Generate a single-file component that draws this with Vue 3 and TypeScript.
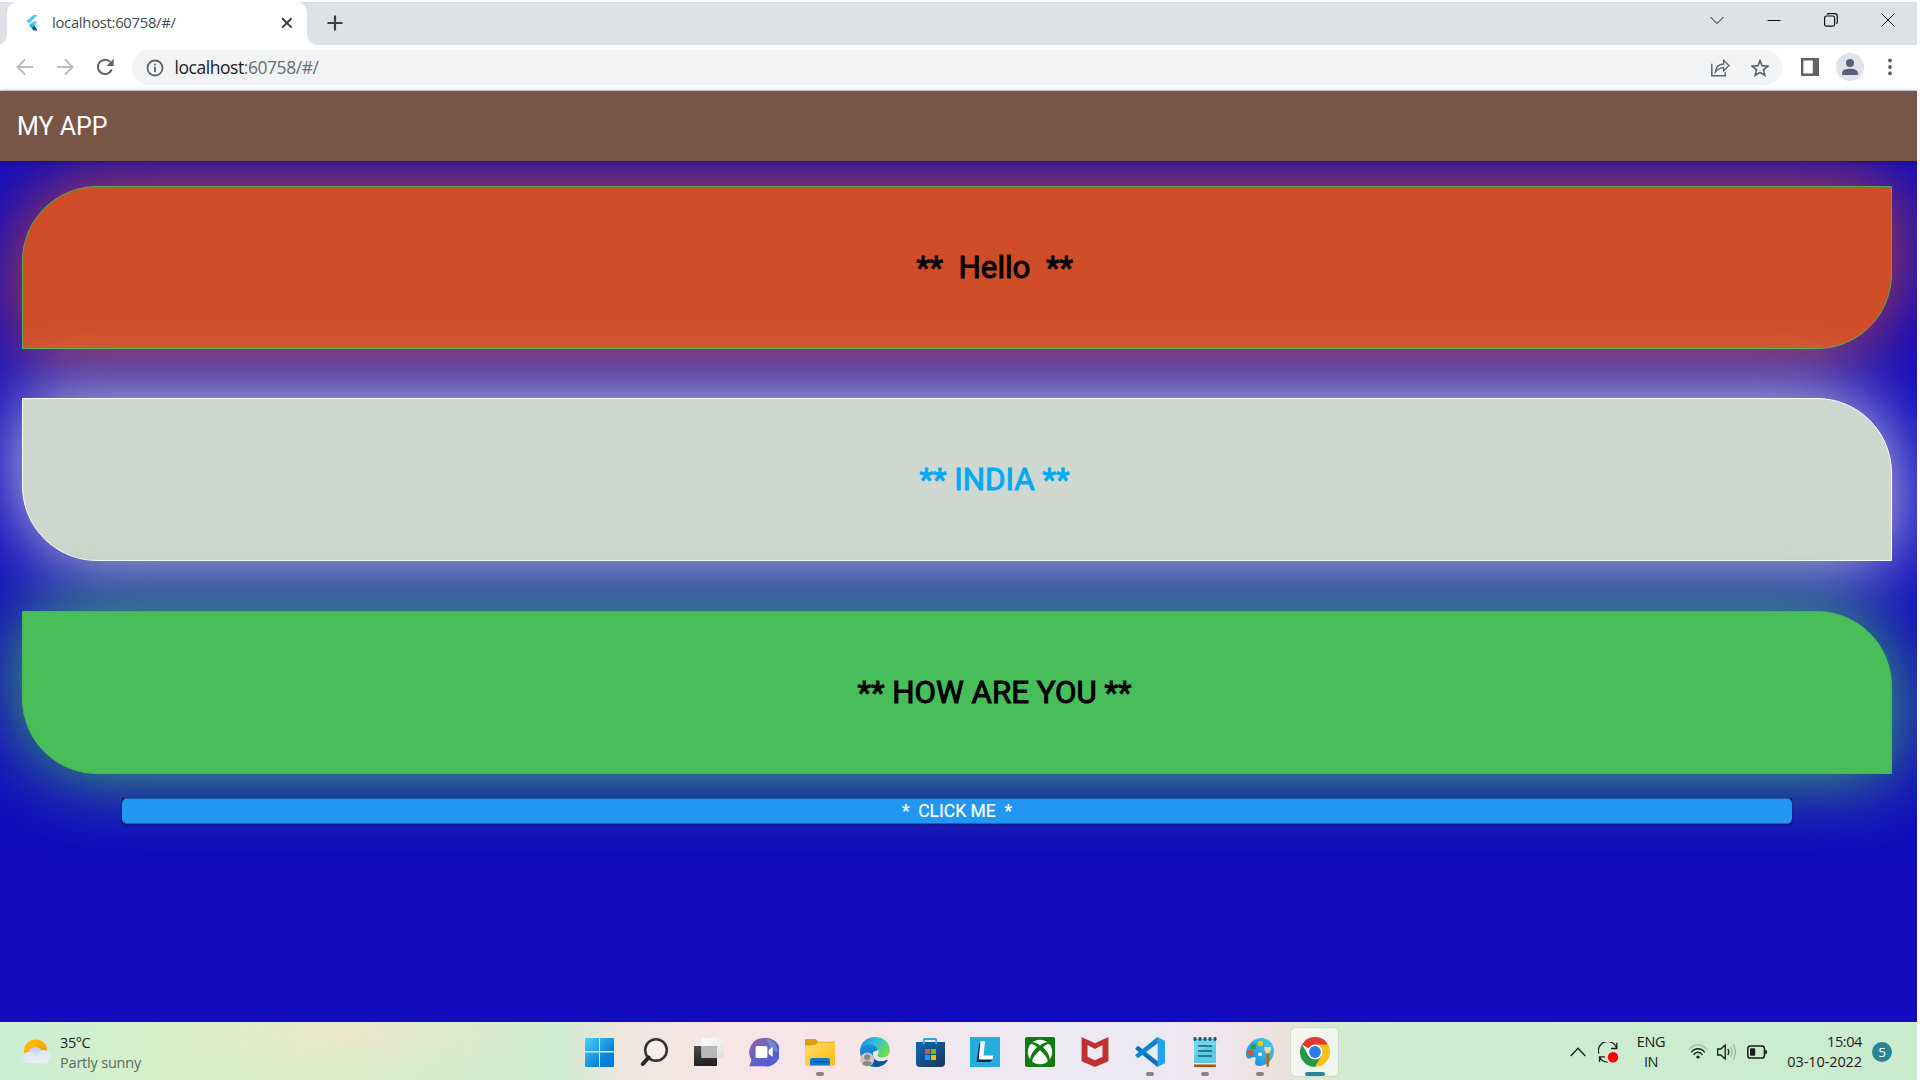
<script setup lang="ts">
interface Banner {
  id: string
  text: string
}

const banners: Banner[] = [
  { id: 'hello', text: '**  Hello  **' },
  { id: 'india', text: '** INDIA **' },
  { id: 'how', text: '** HOW ARE YOU **' },
]
const teeth = [4, 9, 14, 19, 24]
</script>

<template>
  <div class="screen">
    <div class="tabstrip">
      <div class="tab">
        <svg class="favicon" width="12" height="16" viewBox="0 0 12 16">
          <path d="M7.4 0H11.6L3.2 8.6L0.4 5.9Z" fill="#54c5f8" />
          <path d="M7.3 6.6H11.6L8.5 10L5.5 13L2.9 10.4Z" fill="#54c5f8" />
          <path d="M5.5 12.9L8.3 10.3L11.6 15.4H7.6Z" fill="#01579b" />
          <path d="M3 10.4L5.6 8L8.3 10.4L5.6 13Z" fill="#29b6f6" />
        </svg>
        <span class="tab-title">localhost:60758/#/</span>
        <svg class="tab-close" width="12" height="12" viewBox="0 0 12 12"><path d="M1.2 1.2L10.6 10.6M10.6 1.2L1.2 10.6" stroke="#3c4043" stroke-width="2" /></svg>
      </div>
      <svg class="new-tab" width="16" height="16" viewBox="0 0 16 16"><path d="M8 .5V15.5M.5 8H15.5" stroke="#3c4043" stroke-width="2.2" /></svg>
      <div class="window-buttons">
        <svg width="14" height="14" viewBox="0 0 14 14"><path d="M.5 4L7 10.5L13.5 4" /></svg>
        <svg width="14" height="14" viewBox="0 0 14 14"><path d="M.5 7.5H13.5" /></svg>
        <svg width="14" height="14" viewBox="0 0 14 14"><rect x=".6" y="3" width="10" height="10.2" rx="1.8" stroke-width="1.2" /><path d="M3 1.3Q3.5 .6 4.8 .6H10.5Q13.3 .6 13.3 3.4V9Q13.3 10.4 12.4 10.8" stroke-width="1.2" /></svg>
        <svg width="14" height="14" viewBox="0 0 14 14"><path d="M.5 .5L13.5 13.5M13.5 .5L.5 13.5" /></svg>
      </div>
    </div>

    <div class="toolbar">
      <svg class="nav back" width="18" height="18" viewBox="0 0 18 18"><path d="M17 9H2M9 1.5L1.5 9L9 16.5" /></svg>
      <svg class="nav forward" width="18" height="18" viewBox="0 0 18 18"><path d="M1 9H16M9 1.5L16.5 9L9 16.5" /></svg>
      <svg class="reload" width="18" height="18" viewBox="0 0 18 18"><path d="M15.8 11.4A7.2 7.2 0 1 1 14.3 3.9" fill="none" stroke="#5f6368" stroke-width="2" /><path d="M17.7 .8V8H10.5Z" fill="#5f6368" /></svg>
      <div class="omnibox">
        <svg class="info" width="18" height="18" viewBox="0 0 18 18"><circle cx="9" cy="9" r="7.5" fill="none" stroke="#5f6368" stroke-width="1.8" /><path d="M9 7.8V13M9 4.7V6.5" stroke="#5f6368" stroke-width="1.8" /></svg>
        <span class="url"><b>localhost</b>:60758/#/</span>
        <svg class="share" width="19" height="18" viewBox="0 0 19 18" fill="none" stroke="#5f6368" stroke-width="1.5"><path d="M.8 4.8V16.8H14.2V13.2" /><path d="M4.3 13.2C4.8 8 7.8 5.2 12.6 5V1.2L18 6.6L12.6 12V8.6C9 8.6 6.5 10 4.3 13.2Z" stroke-width="1.3" /></svg>
        <svg class="star" width="18" height="18" viewBox="0 0 18 18"><path d="M9 1.6L11.1 6.7L16.8 7.2L12.5 10.9L13.8 16.4L9 13.4L4.2 16.4L5.5 10.9L1.2 7.2L6.9 6.7Z" fill="none" stroke="#5f6368" stroke-width="1.7" /></svg>
      </div>
      <svg class="panel" width="18" height="18" viewBox="0 0 18 18"><path d="M0 0H18V18H0ZM2.4 2.6V15.4H11.8V2.6Z" fill="#5f6368" fill-rule="evenodd" /></svg>
      <svg class="avatar" width="28" height="28" viewBox="0 0 28 28"><circle cx="14" cy="14" r="14" fill="#dfe2e9" /><circle cx="14" cy="10" r="4" fill="#56607a" /><path d="M6.2 22V19.8C6.2 17 10 15.7 14 15.7S21.8 17 21.8 19.8V22Z" fill="#56607a" /></svg>
      <svg class="dots" width="4" height="18" viewBox="0 0 4 18"><circle cx="2" cy="2.5" r="1.9" /><circle cx="2" cy="9" r="1.9" /><circle cx="2" cy="15.4" r="1.9" /></svg>
    </div>

    <header class="appbar">MY APP</header>

    <main class="page">
      <div v-for="b in banners" :key="b.id" class="banner" :class="b.id"><span>{{ b.text }}</span></div>
      <div class="button-slot"><button class="click">*&nbsp; CLICK ME &nbsp;*</button></div>
    </main>

    <footer class="taskbar">
      <div class="weather">
        <svg width="28" height="25" viewBox="0 0 28 25">
          <defs>
            <linearGradient id="sun" x1="0" y1="0" x2="1" y2="1"><stop offset="0" stop-color="#ffc800" /><stop offset="1" stop-color="#f78a00" /></linearGradient>
            <linearGradient id="cloud" x1="0" y1="0" x2="0" y2="1"><stop offset="0" stop-color="#b9d0f3" /><stop offset="1" stop-color="#f3f4fa" /></linearGradient>
          </defs>
          <circle cx="12.6" cy="12" r="11.6" fill="url(#sun)" />
          <path d="M5.5 24A5.5 5.5 0 0 1 5.6 13A7.5 7.5 0 0 1 19 11.6A6.2 6.2 0 1 1 21.8 24Z" fill="url(#cloud)" />
          <path d="M5.5 24A5.5 5.5 0 1 1 9.5 14.5L15 18.4A6.5 6.5 0 1 1 21.8 24Z" fill="#e4e9f6" opacity=".75" />
        </svg>
        <div class="weather-text"><span class="temp">35°C</span><span class="cond">Partly sunny</span></div>
      </div>

      <div class="apps">
        <div class="app">
          <svg viewBox="0 0 30 30"><defs><linearGradient id="win" x1="0" y1="0" x2="1" y2="1"><stop offset="0" stop-color="#4cd0fb" /><stop offset=".65" stop-color="#0a84dc" /><stop offset="1" stop-color="#0078d4" /></linearGradient></defs><path d="M2 1H15V14H1V2Q1 1 2 1ZM16 1H29Q30 1 30 2V14H16ZM1 15.5H15V30H2Q1 30 1 29ZM16 15.5H30V29Q30 30 29 30H16Z" fill="url(#win)" /></svg>
        </div>
        <div class="app">
          <svg viewBox="0 0 30 30"><circle cx="17" cy="13" r="10.8" fill="#fff" fill-opacity=".35" stroke="#343434" stroke-width="2.6" /><path d="M9.6 20.5L3.8 27" stroke="#252525" stroke-width="4" stroke-linecap="round" /></svg>
        </div>
        <div class="app">
          <svg viewBox="0 0 30 30"><defs><linearGradient id="tv" x1="0" y1="0" x2="0" y2="1"><stop offset="0" stop-color="#4c4c4c" /><stop offset="1" stop-color="#1e1e1e" /></linearGradient><linearGradient id="tv2" x1="0" y1="0" x2="1" y2="1"><stop offset="0" stop-color="#fff" /><stop offset="1" stop-color="#ddd" /></linearGradient></defs><rect x="0" y="9" width="23" height="20" rx="1" fill="url(#tv)" /><rect x="7.5" y="1" width="22.5" height="20" rx="1" fill="url(#tv2)" /><path d="M7.5 9H23V21H8.5Q7.5 21 7.5 20Z" fill="#b8b8b8" /></svg>
        </div>
        <div class="app">
          <svg viewBox="0 0 30 30"><defs><linearGradient id="chat" x1=".1" y1=".1" x2=".7" y2="1"><stop offset="0" stop-color="#8e62a8" /><stop offset=".5" stop-color="#6264c4" /><stop offset="1" stop-color="#5059d0" /></linearGradient></defs><path d="M15 1A14.3 14.3 0 1 1 15 29.3H1.5Q0 29.3 .7 28L2.5 23A14.3 14.3 0 0 1 15 1Z" fill="url(#chat)" /><path d="M17 1.5A14.3 14.3 0 0 1 29 15L22 13Z" fill="#7ba0e8" opacity=".55" /><rect x="6.6" y="9" width="11.8" height="12" rx="1.5" fill="#fff" /><path d="M19.7 13L23 10.3Q23.7 10 23.7 11V19Q23.7 20 23 19.6L19.7 17Z" fill="#fff" /></svg>
        </div>
        <div class="app run">
          <svg viewBox="0 0 30 30"><defs><linearGradient id="fold" x1="0" y1="0" x2="1" y2="1"><stop offset="0" stop-color="#ffdb69" /><stop offset="1" stop-color="#fbbc14" /></linearGradient></defs><path d="M0 7V3Q0 2 1 2H10Q11.5 2 13 4.8H29Q30 4.8 30 6V10H0Z" fill="#dc9d10" /><path d="M0 8.5Q10 8.5 12 6.5Q13 5.5 14 5.5H29.2Q30 5.5 30 6.5V27.5Q30 28.5 29 28.5H1Q0 28.5 0 27.5Z" fill="url(#fold)" /><path d="M5 28.5V23.5Q5 21 7.5 21H22.5Q25 21 25 23.5V28.5Z" fill="#1078cf" /><path d="M8 24.8H22" stroke="#064681" stroke-width="1.2" /></svg>
        </div>
        <div class="app">
          <svg viewBox="0 0 30 30"><defs><linearGradient id="edgeA" x1="0" y1="0" x2="1" y2=".5"><stop offset="0" stop-color="#128ee0" /><stop offset=".5" stop-color="#31bfe0" /><stop offset="1" stop-color="#69df50" /></linearGradient><linearGradient id="edgeB" x1="0" y1="0" x2="0" y2="1"><stop offset="0" stop-color="#1994df" /><stop offset="1" stop-color="#0867bd" /></linearGradient></defs><path d="M.2 12C1 5 7 0 15 0C24 0 30 6 30 13C30 18 26 20.5 22 20.5C18.5 20.5 16.5 19 18 17C20 14 17 10.5 12 9.8C7 9 2.5 11 .2 16Z" fill="url(#edgeA)" /><path d="M.1 13C3 6.5 11 6 15.7 9.5C19 12 17.5 14 15 14C11 16 12 22 18 24C22 25.5 26 23.5 28 23C25 28 20 30 15 30C6 30-.5 22 .1 13Z" fill="url(#edgeB)" /><path d="M13 16C12 20 15 24.4 20 24.6Q24 24.7 27.8 22.5C25 28 20 30.4 15 29.8C10 27 9.5 20 13 16Z" fill="#0d55a2" /><circle cx="7.2" cy="22.5" r="7" fill="#c9c6c4" /><circle cx="7.2" cy="20.3" r="3" fill="#8a8785" /><path d="M2.7 27Q3 24 7.2 24T11.8 27Q10 29 7.2 29T2.7 27Z" fill="#8a8785" /></svg>
        </div>
        <div class="app">
          <svg viewBox="0 0 30 30"><defs><linearGradient id="store" x1="0" y1="0" x2="1" y2="1"><stop offset="0" stop-color="#0969b8" /><stop offset="1" stop-color="#203458" /></linearGradient></defs><path d="M8.8 7V3Q8.8 2 9.8 2H20.2Q21.2 2 21.2 3V7" fill="none" stroke="#20a9e8" stroke-width="1.8" /><path d="M1 5H30V26Q30 30 26 30H5Q1 30 1 26Z" fill="url(#store)" /><path d="M8.8 5V7M21.2 5V7" stroke="#3cc6f5" stroke-width="1.8" /><path d="M10 12H15V17H10Z" fill="#f25022" /><path d="M16 12H21V17H16Z" fill="#7fba00" /><path d="M10 18H15V23H10Z" fill="#00a4ef" /><path d="M16 18H21V23H16Z" fill="#ffb900" /></svg>
        </div>
        <div class="app">
          <svg viewBox="0 0 30 30"><rect width="30" height="30" fill="#25aedb" /><path d="M9.5 4.5L6.5 25H20L23 22.5L11 20Z" fill="#0a2a58" /><path d="M10.5 4.3H15L13.5 18.5H23.2L22.6 22.6H8.7Z" fill="#fff" /></svg>
        </div>
        <div class="app">
          <svg viewBox="0 0 30 30"><rect width="30" height="30" rx="2" fill="#107c10" /><circle cx="15" cy="15" r="12.2" fill="#fff" /><path d="M6 5.5C9 4.7 12 6.2 15 8.4C18 6.2 21 4.7 24 5.5L25.5 7C22 6.5 20 8.2 18 10.3C22 14 25.5 19.5 24.7 24L22.8 24.5C22.5 20.5 18.5 16 15 13.2C11.5 16 7.5 20.5 7.2 24.5L5.3 24C4.5 19.5 8 14 12 10.3C10 8.2 8 6.5 4.5 7Z" fill="#107c10" /></svg>
        </div>
        <div class="app">
          <svg viewBox="0 0 30 30"><path d="M1.6 0L15 6.2L28.4 0V24.3L15 30L1.6 24.3ZM7.5 8V19.7L15 23.3L22.5 19.7V8L15 11.9Z" fill="#c2302e" fill-rule="evenodd" /></svg>
        </div>
        <div class="app run">
          <svg viewBox="0 0 30 30"><path d="M.4 11.2L2.5 9.3Q3.2 8.9 4 9.4L23 24.5V29.6L21.5 29.2L.4 12.3Z" fill="#0d70b8" /><path d="M.4 18.8L2.5 20.7Q3.2 21.1 4 20.6L23 6V.4L21.5 .8L.4 17.7Z" fill="#0a86d2" /><path d="M21.4 .5Q22.3 0 23.2 .4L29 3.2Q30 3.7 30 4.8V25.2Q30 26.3 29 26.8L23.2 29.6Q22.3 30 21.4 29.5Q22.7 29.2 22.7 27.5V2.5Q22.7 .8 21.4 .5Z" fill="#26a0f0" /></svg>
        </div>
        <div class="app run">
          <svg viewBox="0 0 30 30"><path d="M4 2H26V26H4Z" fill="#5fcbe2" /><path d="M4 2H26V8Q12 10 4 20Z" fill="#7bdcec" opacity=".7" /><rect x="4" y="26" width="22" height="1.6" fill="#eee" /><path d="M4 27.5H26V29Q26 30 25 30H5Q4 30 4 29Z" fill="#a8510d" /><path d="M8 9H22M8 14H22M8 19H22" stroke="#146178" stroke-width="1.6" /><ellipse v-for="x in teeth" :key="x" :cx="x + 1" cy="2" rx="1.7" ry="2.1" fill="#155e76" /></svg>
        </div>
        <div class="app run">
          <svg viewBox="0 0 30 30"><defs><linearGradient id="paint" x1="1" y1="0" x2="0" y2="1"><stop offset="0" stop-color="#49d0f3" /><stop offset="1" stop-color="#1684d4" /></linearGradient></defs><path d="M15 1C23 0 29 6 29 14C29 22 22 29 14 29C10 29 9.5 26 10.5 23C11.5 20 9 19 6 21C3 22.5 1 21 1 17C1.2 9 7 2 15 1ZM15 15.2A2 2 0 1 0 15.1 19.2A2 2 0 1 0 15 15.2Z" fill="url(#paint)" fill-rule="evenodd" /><circle cx="15.5" cy="6.5" r="2.7" fill="#f6c710" /><circle cx="8.4" cy="9.6" r="2.6" fill="#2d9c2e" /><circle cx="5.4" cy="15.6" r="2.6" fill="#e2532a" /><path d="M19.3 10H25.8V13L24 16.5H21.3L19.3 13Z" fill="#f3d6a9" /><path d="M21.2 16.5H24.2L24 29Q22.6 31 21.6 29Z" fill="#b56a1b" /></svg>
        </div>
        <div class="app active">
          <svg viewBox="0 0 30 30"><path d="M15 15L2 7.5A15 15 0 0 1 28 7.5Z" fill="#e23a2e" /><path d="M15 7.5H28A15 15 0 0 1 15 30L21.5 18.7Z" fill="#fbc116" /><path d="M2 7.5A15 15 0 0 0 15 30L21.5 18.8L15 15L8.5 18.8Z" fill="#279847" /><circle cx="15" cy="15" r="7.4" fill="#fff" /><circle cx="15" cy="15" r="5.9" fill="#2e79ee" /></svg>
        </div>
      </div>

      <div class="tray">
        <svg class="up" width="16" height="10" viewBox="0 0 16 10"><path d="M.7 9L8 1.3L15.3 9" fill="none" stroke="#1b1b1b" stroke-width="1.3" /></svg>
        <svg class="sync" width="21" height="21" viewBox="0 0 21 21"><path d="M.8 11.5A9 9 0 0 1 18.6 6M18.8 .8V6.5H13M1.5 20V14.8H7M1.5 15Q4 19.8 9.5 20.2" fill="none" stroke="#1b1b1b" stroke-width="1.3" /><circle cx="15" cy="15.2" r="5.2" fill="#f00" /></svg>
        <div class="lang"><span>ENG</span><span>IN</span></div>
        <svg class="wifi" width="20" height="16" viewBox="0 0 20 16" fill="none" stroke="#1b1b1b" stroke-width="1.4"><path d="M.7 6.2Q4.5 1 10 1T19.3 6.2" stroke="#a5bfa6" /><path d="M3.2 8.4Q6 4.8 10 4.8T16.8 8.4M5.6 10.8Q7.4 8.3 10 8.3T14.4 10.8" /><circle cx="10" cy="13" r="1.6" fill="#1b1b1b" stroke="none" /></svg>
        <svg class="vol" width="21" height="18" viewBox="0 0 21 18" fill="none" stroke="#1b1b1b" stroke-width="1.3"><path d="M.7 6H3.8L8.2 2V16L3.8 12H.7Z" /><path d="M10.8 6Q12.8 9 10.8 12" /><path d="M13.5 3.8Q16.7 9 13.5 14.2M16.2 1.5Q20.8 9 16.2 16.5" stroke="#a0b9a1" /></svg>
        <svg class="bat" width="21" height="14" viewBox="0 0 21 14"><rect x=".8" y="1" width="16.6" height="12" rx="2.6" fill="none" stroke="#1b1b1b" stroke-width="1.5" /><rect x="3" y="3.2" width="5.2" height="7.6" rx="1" fill="#1b1b1b" /><path d="M18.2 4.5Q20.2 5 20.2 7T18.2 9.5Z" fill="#1b1b1b" /></svg>
        <div class="clock"><span>15:04</span><span class="date">03-10-2022</span></div>
        <div class="badge">5</div>
      </div>
    </footer>
  </div>
</template>

<style>
body {
  margin: 0;
  background: #fff;
  overflow: hidden;
}
</style>

<style scoped>
.screen {
  width: 1917px;
  height: 1080px;
  padding-top: 2px;
  box-sizing: border-box;
  display: flex;
  flex-direction: column;
  font-family: "Open Sans", "Noto Sans", sans-serif;
  overflow: hidden;
}
svg { display: block; flex: none; }

.tabstrip {
  height: 43px;
  flex: none;
  background: #dee1e6;
  display: flex;
  overflow: hidden;
}
.tab {
  position: relative;
  width: 300px;
  margin-left: 7px;
  box-sizing: border-box;
  padding: 0 14px 0 19px;
  background: #fff;
  border-radius: 10px 10px 0 0;
  display: flex;
  align-items: center;
}
.tab::before, .tab::after {
  content: "";
  position: absolute;
  bottom: 0;
  width: 10px;
  height: 10px;
}
.tab::before { left: -10px; background: radial-gradient(circle at 0 0, transparent 9.5px, #fff 10px); }
.tab::after { right: -10px; background: radial-gradient(circle at 100% 0, transparent 9.5px, #fff 10px); }
.favicon { margin-top: -2px; }
.tab-title {
  margin-left: 14px;
  margin-top: -4px;
  font-size: 14.8px;
  letter-spacing: -0.27px;
  color: #45494d;
  white-space: nowrap;
}
.tab-close { margin-left: auto; margin-top: -1px; }
.new-tab { margin: 13px 0 0 19.5px; }
.window-buttons {
  margin-left: auto;
  margin-right: 22px;
  height: 37px;
  display: flex;
  align-items: center;
  gap: 43px;
}
.window-buttons svg { margin-top: -1px; fill: none; stroke: #111; stroke-width: 1; }

.toolbar {
  height: 46px;
  flex: none;
  box-sizing: border-box;
  background: #fff;
  border-bottom: 1px solid #d4d5d8;
  display: flex;
  align-items: center;
}
.toolbar > svg { margin-top: -1px; }
.nav { fill: none; stroke: #babcbe; stroke-width: 1.9; }
.back { margin-left: 16px; }
.forward { margin-left: 22px; }
.reload { margin-left: 21.5px; }
.omnibox {
  width: 1650px;
  height: 35px;
  margin-left: 18.5px;
  border-radius: 18px;
  background: #f1f3f4;
  display: flex;
  align-items: center;
}
.info { margin-left: 13.5px; }
.url {
  margin-left: 11px;
  margin-top: -1px;
  font-size: 17.5px;
  letter-spacing: -0.45px;
  color: #6a6e73;
  white-space: nowrap;
}
.url b { font-weight: 400; color: #202124; }
.share { margin-left: auto; }
.star { margin: 0 13.5px 0 21px; }
.panel { margin-left: 18.5px; }
.avatar { margin-left: 17.5px; }
.dots { margin-left: 23.5px; fill: #5f6368; }

.appbar {
  position: relative;
  z-index: 1;
  height: 70px;
  flex: none;
  box-sizing: border-box;
  padding-left: 17px;
  background: #795548;
  color: #fff;
  font: 400 25px/72px Roboto, sans-serif;
  box-shadow: 0 1px 5px rgba(0, 0, 0, 0.3);
}
.page {
  height: 861px;
  flex: none;
  box-sizing: border-box;
  padding: 25px 25px 0 22px;
  background: #120cbe;
  display: flex;
  flex-direction: column;
  overflow: hidden;
}
.banner {
  height: 163px;
  flex: none;
  box-sizing: border-box;
  padding-left: 75px;
  border: 1.25px solid;
  display: flex;
  align-items: center;
  justify-content: center;
  white-space: pre;
  color: #000;
  font: 400 31.25px/36px Roboto, sans-serif;
  -webkit-text-stroke: 1px currentColor;
}
.hello {
  background: #cf4d27;
  border-color: #4caf50;
  border-radius: 75px 0;
  box-shadow: 0 0 78px #cf4d27;
  margin-bottom: 49px;
}
.india {
  background: #cfd8d0;
  border-color: #fff;
  border-radius: 0 75px;
  box-shadow: 0 0 78px #dbe2df;
  margin-bottom: 50px;
}
.india span { color: #03a9f4; -webkit-text-stroke-color: #03a9f4; }
.how {
  background: #47be5a;
  border-color: #4bb453;
  border-radius: 0 75px;
  box-shadow: 0 0 78px #47be5a;
  margin-bottom: 24px;
}
.button-slot {
  margin: 0 100px;
  height: 26px;
  flex: none;
  background: #050524;
  box-shadow: 0 1px 3px rgba(0, 0, 0, 0.3);
  display: flex;
}
.click {
  flex: 1;
  padding: 0;
  border: 0;
  border-radius: 5px;
  background: #2196f3;
  box-shadow: inset 0 1px #1a63a6, inset 0 -1px #1a63a6;
  color: #fff;
  font: 400 17.5px/26px Roboto, sans-serif;
  -webkit-text-stroke: 0.2px #fff;
  white-space: pre;
}

.taskbar {
  flex: 1;
  display: flex;
  background:
    radial-gradient(ellipse 190px 40px at 350px 12px, rgba(245, 226, 205, 0.6), transparent),
    linear-gradient(90deg, #cbeed4 0, #d6f0cb 150px, #dcedca 330px, #d3edce 480px, #cfecd0 560px, #efe6de 625px, #f8e5e6 720px, #f7e4e7 850px, #efe8f0 960px, #ebe9f3 1140px, #efe6ef 1210px, #efe1df 1270px, #d9e9d2 1325px, #cdecd0 1370px, #cbebce 100%);
}
.weather {
  width: 571px;
  padding-left: 23px;
  box-sizing: border-box;
  display: flex;
}
.weather > svg { margin-top: 16.5px; }
.weather-text {
  margin-left: 9px;
  padding-top: 10.5px;
  display: flex;
  flex-direction: column;
  font-size: 14.5px;
  line-height: 20px;
}
.temp { color: #1b1b1b; letter-spacing: -0.4px; }
.cond { color: #586b59; letter-spacing: -0.2px; }
.apps { display: flex; }
.app {
  position: relative;
  width: 55px;
  height: 58px;
}
.app svg {
  position: relative;
  width: 30px;
  height: 30px;
  margin: 15px 0 0 13px;
}
.app:nth-child(n + 5) svg { margin-left: 14px; }
.app.run::after, .app.active::after {
  content: "";
  position: absolute;
  left: 25px;
  top: 50px;
  width: 8px;
  height: 4px;
  border-radius: 2px;
  background: #878388;
}
.app.active::after { left: 19px; width: 20px; background: #268596; }
.app.active::before {
  content: "";
  position: absolute;
  left: 5px;
  top: 6px;
  width: 47px;
  height: 48px;
  border-radius: 5px;
  background: rgba(255, 255, 255, 0.6);
  box-shadow: 0 0 1px 1px rgba(0, 0, 0, 0.06);
}
.tray {
  margin-left: auto;
  padding-right: 25px;
  display: flex;
  color: #1b1b1b;
  font-size: 14.5px;
  line-height: 20px;
}
.up { margin-top: 25px; }
.sync { margin: 20px 0 0 12px; }
.lang {
  width: 38px;
  margin-left: 13px;
  padding-top: 10.4px;
  display: flex;
  flex-direction: column;
  align-items: center;
  letter-spacing: -0.4px;
}
.wifi { margin: 22px 0 0 18px; }
.vol { margin: 21px 0 0 9px; }
.bat { margin: 23px 0 0 9px; }
.clock {
  width: 94px;
  padding-top: 10px;
  display: flex;
  flex-direction: column;
  align-items: flex-end;
  letter-spacing: -0.4px;
}
.date { letter-spacing: -0.1px; }
.badge {
  width: 20px;
  height: 20px;
  margin: 20px 0 0 10px;
  border-radius: 50%;
  background: #268596;
  color: #fff;
  font-size: 13.5px;
  text-align: center;
}
</style>
